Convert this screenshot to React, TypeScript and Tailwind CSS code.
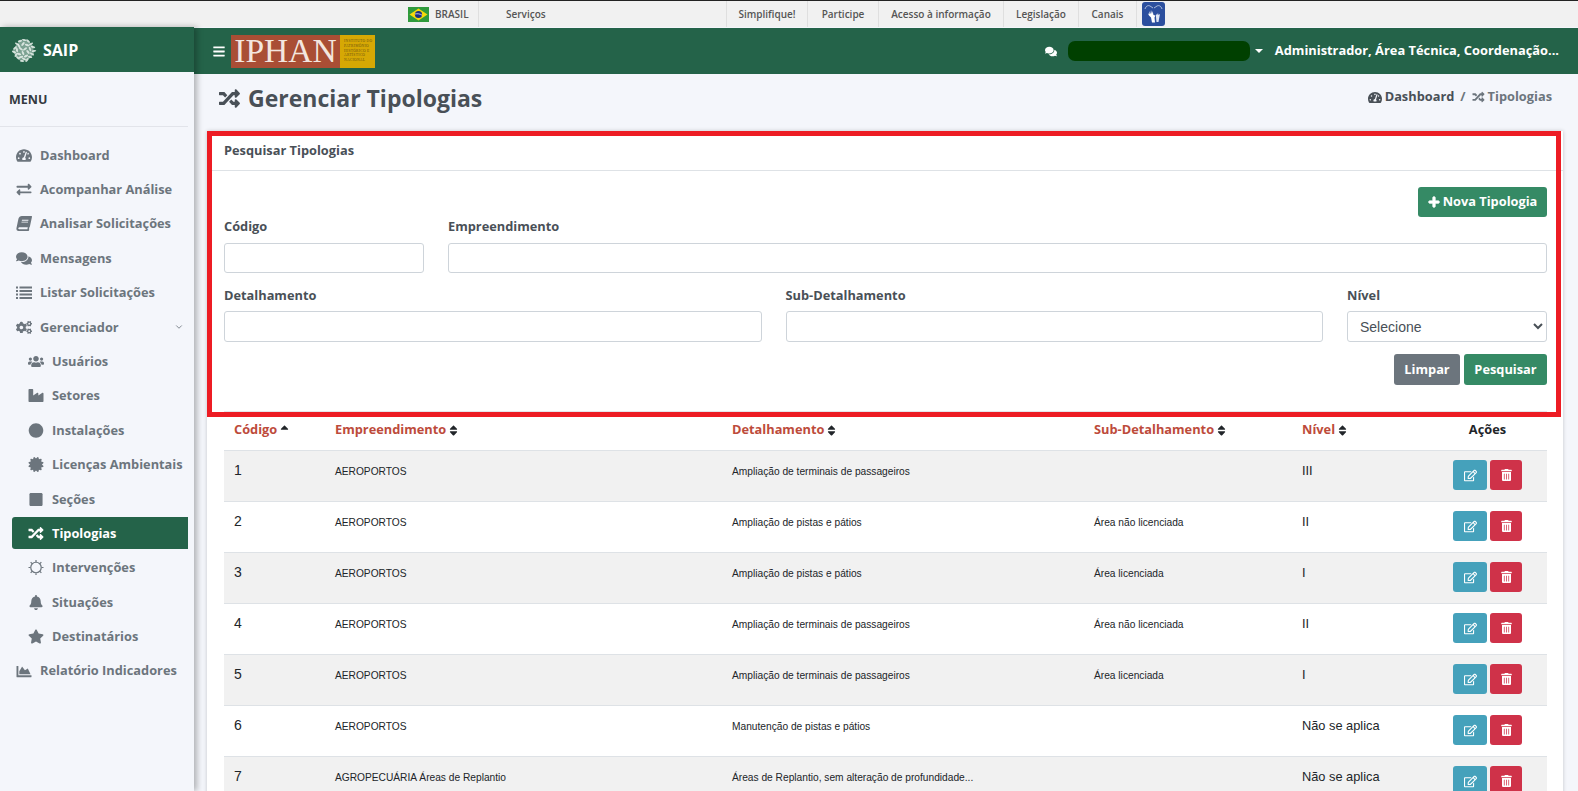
import {
  FaBars,
  FaBell,
  FaBook,
  FaCertificate,
  FaChartArea,
  FaCircle,
  FaCogs,
  FaComments,
  FaExchangeAlt,
  FaIndustry,
  FaPlus,
  FaRandom,
  FaRegEdit,
  FaSort,
  FaSortUp,
  FaSquare,
  FaStar,
  FaTachometerAlt,
  FaTrashAlt,
  FaUsers,
} from "react-icons/fa";
import { ChevronDown } from "lucide-react";
import type { ComponentType } from "react";

type IconProps = { className?: string };

function ListIcon({ className }: IconProps) {
  return (
    <svg viewBox="0 0 16 14" className={className} fill="currentColor">
      <path d="M0 1h2v2H0zM3.500 1H16v2H3.500zM0 4.500h2v2H0zM3.500 4.500H16v2H3.500zM0 8h2v2H0zM3.500 8H16v2H3.500zM0 11.500h2v2H0zM3.500 11.500H16v2H3.500z" />
    </svg>
  );
}

function SunIcon({ className }: IconProps) {
  return (
    <svg viewBox="0 0 16 16" className={className} fill="none" stroke="currentColor">
      <circle cx="8" cy="8" r="5.600" strokeWidth="1.300" />
      <path d="M8 0v2M8 14v2M0 8h2M14 8h2M2.300 2.300l1.500 1.500M12.200 12.200l1.500 1.500M2.300 13.700l1.500-1.500M12.200 3.800l1.500-1.500" strokeWidth="1.300" />
    </svg>
  );
}

function SlantedBook({ className }: IconProps) {
  return <FaBook className={`${className} -skew-x-[12deg]`} />;
}

type MenuItem = {
  label: string;
  icon: ComponentType<IconProps>;
  sub?: boolean;
  active?: boolean;
  arrow?: boolean;
};

const menu: MenuItem[] = [
  { label: "Dashboard", icon: FaTachometerAlt },
  { label: "Acompanhar Análise", icon: FaExchangeAlt },
  { label: "Analisar Solicitações", icon: SlantedBook },
  { label: "Mensagens", icon: FaComments },
  { label: "Listar Solicitações", icon: ListIcon },
  { label: "Gerenciador", icon: FaCogs, arrow: true },
  { label: "Usuários", icon: FaUsers, sub: true },
  { label: "Setores", icon: FaIndustry, sub: true },
  { label: "Instalações", icon: FaCircle, sub: true },
  { label: "Licenças Ambientais", icon: FaCertificate, sub: true },
  { label: "Seções", icon: FaSquare, sub: true },
  { label: "Tipologias", icon: FaRandom, sub: true, active: true },
  { label: "Intervenções", icon: SunIcon, sub: true },
  { label: "Situações", icon: FaBell, sub: true },
  { label: "Destinatários", icon: FaStar, sub: true },
  { label: "Relatório Indicadores", icon: FaChartArea },
];

const rows = [
  { id: "1", emp: "AEROPORTOS", det: "Ampliação de terminais de passageiros", sub: "", nivel: "III" },
  { id: "2", emp: "AEROPORTOS", det: "Ampliação de pistas e pátios", sub: "Área não licenciada", nivel: "II" },
  { id: "3", emp: "AEROPORTOS", det: "Ampliação de pistas e pátios", sub: "Área licenciada", nivel: "I" },
  { id: "4", emp: "AEROPORTOS", det: "Ampliação de terminais de passageiros", sub: "Área não licenciada", nivel: "II" },
  { id: "5", emp: "AEROPORTOS", det: "Ampliação de terminais de passageiros", sub: "Área licenciada", nivel: "I" },
  { id: "6", emp: "AEROPORTOS", det: "Manutenção de pistas e pátios", sub: "", nivel: "Não se aplica" },
  { id: "7", emp: "AGROPECUÁRIA Áreas de Replantio", det: "Áreas de Replantio, sem alteração de profundidade...", sub: "", nivel: "Não se aplica" },
];

const columns = [
  { label: "Código", sorted: true },
  { label: "Empreendimento" },
  { label: "Detalhamento" },
  { label: "Sub-Detalhamento" },
  { label: "Nível" },
];

const labelClass = "block text-[12.8px] leading-[20px] font-bold text-[#495057]";
const inputClass = "block h-[31px] w-full rounded-[3px] border border-[#ced4da] bg-white";

// small leaflets scattered over the tree shape of the SAIP mark
const leaflets = [
  [6, 7, 30], [9, 4, -20], [13, 3, 10], [17, 4, 40], [20, 7, -30], [22, 10, 15], [4, 11, -40], [8, 9, 60],
  [12, 7, -50], [16, 8, 20], [19, 12, 70], [23, 14, -10], [3, 15, 25], [6, 13, 80], [10, 12, 35], [14, 12, -35],
  [17, 15, 50], [21, 17, 30], [5, 18, -60], [8, 17, 15], [12, 16, 65], [15, 19, -25], [19, 20, 10], [7, 21, 40],
  [10, 20, -15], [13, 22, 30], [16, 23, -50], [11, 24, 5],
];

function LeafLogo() {
  return (
    <svg viewBox="0 0 26 26" className="h-[26px] w-[26px] shrink-0" fill="#e8f0eb">
      <path d="M9 4l8-1 5 6 1 8-5 5-7 2-6-4-3-6 3-6z" opacity="0.45" />
      {leaflets.map(([x, y, r]) => (
        <ellipse key={`${x}-${y}`} cx={x} cy={y} rx="2.300" ry="1" transform={`rotate(${r} ${x} ${y})`} opacity="0.85" />
      ))}
    </svg>
  );
}

function BrazilFlag() {
  return (
    <svg viewBox="0 0 21 15" className="h-[15px] w-[21px] shrink-0">
      <rect width="21" height="15" fill="#2f9a3c" />
      <path d="M10.500 1.500 19.500 7.500 10.500 13.500 1.500 7.500z" fill="#f5d90a" />
      <circle cx="10.500" cy="7.500" r="3.600" fill="#1c2f80" />
      <path d="M7 7c2.500-.6 5-.2 7 1.200" stroke="#fff" strokeWidth="0.7" fill="none" />
    </svg>
  );
}

function SignLanguageIcon() {
  return (
    <svg viewBox="0 0 23 24" className="h-[24px] w-[23px] shrink-0">
      <rect width="23" height="24" rx="3" fill="#2c4f9e" />
      <path d="M3 7c1-3 3-4 5-3l3 2M20 7c-1-3-3-4-5-3l-3 2" stroke="#dfe6f5" strokeWidth="0.7" fill="none" />
      <path d="M7 9l1.500 3 .5-4 1 4 .5-3 1 4 2 .5-1 2 .5 5H10l-1-5-2-2-1-2 1.500.5z" fill="#fff" />
      <path d="M14 12l1 1 1-2 .5 2 1.500-1-1 5-.5 3h-2l-.5-5z" fill="#dfe6f5" />
    </svg>
  );
}

function Sidebar() {
  return (
    <aside className="z-10 flex w-[194px] shrink-0 flex-col bg-[#f4f6fb] shadow-[3px_0_6px_rgba(0,0,0,0.28)]">
      <div className="flex h-[45px] items-center gap-[6px] bg-[#246349] pl-[11px] text-[16px] font-bold text-white">
        <LeafLogo />
        <span>SAIP</span>
      </div>
      <div className="mr-[6px] flex h-[55px] items-center border-b border-[#e2e4ea] pl-[9px] pt-[3px] text-[12.5px] font-bold text-[#343a40]">
        MENU
      </div>
      <nav className="pt-[11px]">
        {menu.map((item) => {
          const Icon = item.icon;
          return (
            <div key={item.label} className="flex h-[34.4px] items-center">
              <div
                className={`ml-[12px] flex h-[32px] w-[176px] items-center rounded-l-[3px] ${
                  item.active ? "bg-[#246349] text-white" : "text-[#6c757d]"
                } ${item.sub ? "pl-[16px]" : "pl-[4px]"}`}
              >
                <Icon className="h-[15px] w-[16px] shrink-0" />
                <span className="ml-[8px] text-[12.8px] font-bold">{item.label}</span>
                {item.arrow && <ChevronDown className="ml-auto mr-[4px] h-[10px] w-[10px]" />}
              </div>
            </div>
          );
        })}
      </nav>
    </aside>
  );
}

function TopBar() {
  const links = [
    { label: "Simplifique!", w: "w-[81px]" },
    { label: "Participe", w: "w-[71px]" },
    { label: "Acesso à informação", w: "w-[125px]" },
    { label: "Legislação", w: "w-[75px]" },
    { label: "Canais", w: "w-[58px]" },
  ];
  return (
    <div className="flex h-[27px] shrink-0 items-stretch border-t border-[#222] bg-[#f1f1f1] pl-[408px] text-[10px] font-semibold text-[#555]">
      <div className="flex w-[71px] items-center gap-[6px] border-r border-[#dfdfdf]">
        <BrazilFlag />
        <span>BRASIL</span>
      </div>
      <div className="flex w-[248px] items-center border-r border-[#dfdfdf] pl-[27px]">Serviços</div>
      {links.map((link) => (
        <div key={link.label} className={`flex items-center justify-center border-r border-[#dfdfdf] ${link.w}`}>
          {link.label}
        </div>
      ))}
      <div className="flex items-center pl-[5px]">
        <SignLanguageIcon />
      </div>
    </div>
  );
}

function NavBar() {
  return (
    <header className="mt-px flex h-[46px] shrink-0 items-center bg-[#246349] text-white">
      <FaBars className="ml-[19px] h-[13px] w-[12px]" />
      <div className="ml-[6px] flex h-[33px] items-stretch">
        <div className="flex w-[109px] items-center justify-center bg-[#a94e35] font-['Liberation_Serif',serif] text-[33.5px] leading-none text-[#f3e6df]">
          IPHAN
        </div>
        <div className="flex w-[35px] flex-col justify-center whitespace-nowrap bg-[#d6a804] pl-[4px] font-['Liberation_Serif',serif] text-[3.6px] leading-[4.7px] tracking-[0.3px] text-[#6b5310]">
          <span>INSTITUTO DO</span>
          <span>PATRIMÔNIO</span>
          <span>HISTÓRICO E</span>
          <span>ARTÍSTICO</span>
          <span>NACIONAL</span>
        </div>
      </div>
      <FaComments className="ml-auto h-[11px] w-[12px]" />
      <div className="ml-[11px] h-[20px] w-[182px] rounded-[7px] bg-[#004000]" />
      <div className="ml-[5px] h-0 w-0 border-x-[4px] border-t-[4px] border-x-transparent border-t-white" />
      <div className="ml-[12px] mr-[19px] text-[12.85px] font-bold">Administrador, Área Técnica, Coordenação...</div>
    </header>
  );
}

function SearchCard() {
  return (
    <>
      <div className="flex h-[40px] items-center border-b border-[#dee2e6] pl-[17px] pt-[1px] text-[12.8px] font-bold text-[#495057]">
        Pesquisar Tipologias
      </div>
      <div className="pl-[17px] pr-[16px] pt-[16px]">
        <div className="flex justify-end">
          <button className="flex h-[30px] w-[129px] items-center justify-center gap-[3px] rounded-[3px] bg-[#358a65] text-[12.8px] font-bold text-white">
            <FaPlus className="h-[12px] w-[12px] stroke-current stroke-[40]" />
            Nova Tipologia
          </button>
        </div>
        <div className="mt-[-1px] grid grid-cols-[200px_1fr] gap-x-6">
          <div>
            <label className={`${labelClass} mb-[7px]`}>Código</label>
            <div className="block h-[30px] w-full rounded-[3px] border border-[#ced4da] bg-white" />
          </div>
          <div>
            <label className={`${labelClass} mb-[7px]`}>Empreendimento</label>
            <div className="block h-[30px] w-full rounded-[3px] border border-[#ced4da] bg-white" />
          </div>
        </div>
        <div className="mt-[12px] grid grid-cols-[1fr_1fr_200px] gap-x-6">
          <div>
            <label className={`${labelClass} mb-[6px]`}>Detalhamento</label>
            <div className={inputClass} />
          </div>
          <div>
            <label className={`${labelClass} mb-[6px]`}>Sub-Detalhamento</label>
            <div className={inputClass} />
          </div>
          <div>
            <label className={`${labelClass} mb-[6px]`}>Nível</label>
            <select className="block h-[31px] w-full rounded-[3px] border border-[#ced4da] bg-white pl-[8px] font-['Liberation_Sans',sans-serif] text-[14px] text-[#495057]">
              <option>Selecione</option>
            </select>
          </div>
        </div>
        <div className="mt-[12px] flex justify-end gap-[4px] text-[12.8px] font-bold text-white">
          <button className="h-[31px] w-[66px] rounded-[3px] bg-[#6c757d]">Limpar</button>
          <button className="h-[31px] w-[83px] rounded-[3px] bg-[#358a65]">Pesquisar</button>
        </div>
      </div>
    </>
  );
}

function DataTable() {
  return (
    <div className="mt-[26px] pl-[17px] pr-[16px]">
      <table className="w-full table-fixed border-t border-[#e4e6eb]">
        <colgroup>
          <col className="w-[101px]" />
          <col className="w-[397px]" />
          <col className="w-[362px]" />
          <col className="w-[208px]" />
          <col className="w-[134px]" />
          <col className="w-[121px]" />
        </colgroup>
        <thead>
          <tr className="h-[39px] border-b border-[#dee2e6] text-[12.8px]">
            {columns.map((col) => (
              <th key={col.label} className="pb-[2px] pl-[10px] text-left font-bold text-[#bd4b3b]">
                <span className="inline-flex items-center gap-[3px]">
                  {col.label}
                  {col.sorted ? (
                    <FaSortUp className="h-[13px] w-[9px] text-[#212529]" />
                  ) : (
                    <FaSort className="h-[13px] w-[9px] text-[#212529]" />
                  )}
                </span>
              </th>
            ))}
            <th className="pb-[2px] pl-[2px] text-center font-bold text-[#212529]">Ações</th>
          </tr>
        </thead>
        <tbody className="font-['Liberation_Sans',sans-serif] text-[#212529]">
          {rows.map((row, i) => (
            <tr key={row.id} className={`h-[51px] border-b border-[#dee2e6] ${i % 2 === 0 ? "bg-[#f1f1f1]" : "bg-white"}`}>
              <td className="pl-[10px] pt-[9px] align-top text-[14px] leading-[21px]">{row.id}</td>
              <td className="pl-[10px] pt-[13px] align-top text-[10.2px] leading-[15px]">{row.emp}</td>
              <td className="pl-[10px] pt-[13px] align-top text-[10.2px] leading-[15px]">{row.det}</td>
              <td className="pl-[10px] pt-[13px] align-top text-[10.2px] leading-[15px]">{row.sub}</td>
              <td className="pl-[10px] pt-[9px] align-top text-[12.8px] leading-[21px]">{row.nivel}</td>
              <td className="pt-[9px] align-top">
                <div className="flex justify-center gap-[3px] pl-[2px]">
                  <button className="flex h-[30px] w-[34px] items-center justify-center rounded-[3px] bg-[#45a1bb] text-white">
                    <FaRegEdit className="h-[13px] w-[13px]" />
                  </button>
                  <button className="flex h-[30px] w-[32px] items-center justify-center rounded-[3px] bg-[#cf3249] text-white">
                    <FaTrashAlt className="h-[12px] w-[11px]" />
                  </button>
                </div>
              </td>
            </tr>
          ))}
        </tbody>
      </table>
    </div>
  );
}

export default function App() {
  return (
    <div className="flex h-screen flex-col overflow-hidden bg-[#f4f6fb] font-['Open_Sans',sans-serif]">
      <TopBar />
      <div className="flex min-h-0 flex-1">
        <Sidebar />
        <main className="flex min-w-0 flex-1 flex-col">
          <NavBar />
          <div className="flex h-[57px] shrink-0 items-center justify-between pl-[24px] pr-[26px]">
            <h1 className="mb-[8px] flex items-center gap-[7px] text-[23px] font-bold text-[#495057]">
              <FaRandom className="h-[21px] w-[23px]" />
              Gerenciar Tipologias
            </h1>
            <div className="mb-[11px] flex items-center text-[12.8px] font-bold">
              <FaTachometerAlt className="mr-[3px] h-[13px] w-[14px] text-[#495057]" />
              <span className="text-[#495057]">Dashboard</span>
              <span className="mx-[6px] text-[#6c757d]">/</span>
              <FaRandom className="mr-[3px] h-[12px] w-[13px] text-[#6c757d]" />
              <span className="text-[#6c757d]">Tipologias</span>
            </div>
          </div>
          <section className="relative ml-[13px] mr-[15px] flex-1 bg-white shadow-[0_0_4px_rgba(0,0,0,0.2)]">
            <SearchCard />
            <DataTable />
            <div className="pointer-events-none absolute left-0 top-0 h-[286px] w-[1354px] border-[5px] border-[#ed1c24]" />
          </section>
        </main>
      </div>
    </div>
  );
}
